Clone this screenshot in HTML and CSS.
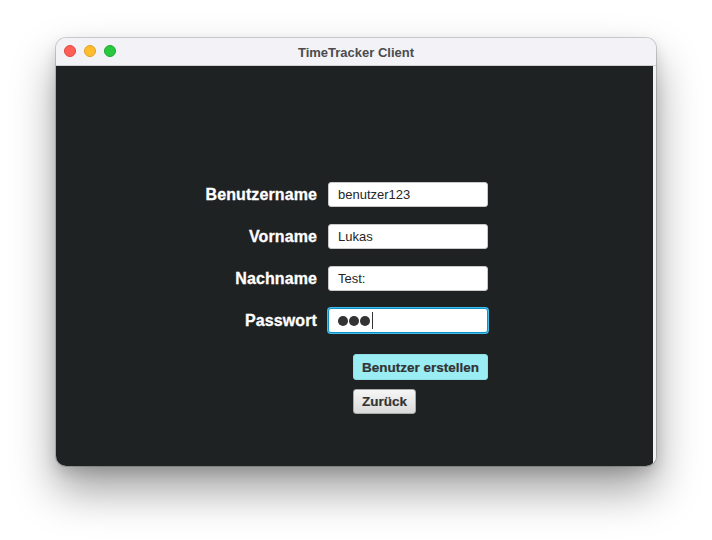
FILE: index.html
```html
<!DOCTYPE html>
<html lang="de">
<head>
<meta charset="utf-8">
<title>TimeTracker Client</title>
<link rel="stylesheet" href="styles.css">
</head>
<body>
<div class="window">
  <div class="titlebar">
    <div class="lights">
      <span class="light red"></span>
      <span class="light yellow"></span>
      <span class="light green"></span>
    </div>
    <div class="title">TimeTracker Client</div>
  </div>
  <div class="content">
    <div class="pane">
      <div class="form">
        <label class="label">Benutzername</label>
        <div class="field">benutzer123</div>
        <label class="label">Vorname</label>
        <div class="field">Lukas</div>
        <label class="label">Nachname</label>
        <div class="field">Test:</div>
        <label class="label">Passwort</label>
        <div class="field focused" aria-label="Passwort ●●●"><span class="dot"></span><span class="dot"></span><span class="dot"></span><span class="caret"></span></div>
      </div>
      <div class="actions">
        <button class="btn primary">Benutzer erstellen</button>
        <button class="btn secondary">Zurück</button>
      </div>
    </div>
    <div class="strip"></div>
  </div>
</div>
</body>
</html>
```
FILE: styles.css
```css
html, body {
  margin: 0;
  padding: 0;
  background: #ffffff;
}
body {
  padding: 38px 0 0 56px;
  height: 540px;
  box-sizing: border-box;
  font-family: "Liberation Sans", Arial, sans-serif;
}
.window {
  width: 600px;
  height: 428px;
  border-radius: 10px;
  overflow: hidden;
  box-shadow: 0 0 0 1px rgba(0,0,0,0.16), 0 24px 44px rgba(0,0,0,0.38), 0 6px 14px rgba(0,0,0,0.14);
  display: flex;
  flex-direction: column;
}
.titlebar {
  height: 28px;
  background: #f3f2f7;
  position: relative;
  display: flex;
  align-items: center;
  justify-content: center;
  border-bottom: 1px solid #d0d0d0;
  box-sizing: border-box;
}
.lights {
  position: absolute;
  left: 8px;
  top: 7px;
  display: flex;
  gap: 8px;
}
.light {
  width: 12px;
  height: 12px;
  border-radius: 50%;
  box-sizing: border-box;
}
.red { background: #fe5f57; border: 0.5px solid #e2463f; }
.yellow { background: #febc2e; border: 0.5px solid #e1a123; }
.green { background: #28c840; border: 0.5px solid #1daa2c; }
.title {
  font-size: 13px;
  font-weight: bold;
  color: #4b4b4d;
  margin-left: 0;
  margin-top: 1px;
}
.content {
  flex: 1;
  display: flex;
}
.pane {
  flex: 1;
  background: #1f2223;
  padding: 116px 0 0 111px;
}
.strip {
  width: 3px;
  background: #f2f2f2;
}
.form {
  display: grid;
  grid-template-columns: 150px 160px;
  column-gap: 11px;
  row-gap: 17px;
  align-items: center;
}
.label {
  text-align: right;
  color: #ffffff;
  font-size: 16px;
  font-weight: bold;
  letter-spacing: 0.1px;
  -webkit-text-stroke: 0.3px #ffffff;
}
.field {
  height: 25px;
  box-sizing: border-box;
  background: #ffffff;
  border: 1px solid #c9c9c9;
  border-radius: 3px;
  padding: 0 9px;
  font-size: 13px;
  color: #262626;
  display: flex;
  align-items: center;
}
.field.focused {
  border: 1px solid #0a93c7;
  box-shadow: 0 0 0 1px #46bde9;
  padding-left: 9px;
  gap: 1px;
}
.dot {
  width: 10px;
  height: 10px;
  border-radius: 50%;
  background: #333333;
}
.caret {
  display: inline-block;
  width: 1px;
  height: 17px;
  background: #333;
  margin-left: 1px;
}
.actions {
  display: flex;
  flex-direction: column;
  align-items: flex-start;
  gap: 9px;
  margin: 21px 0 0 186px;
}
.btn {
  font-family: "Liberation Sans", Arial, sans-serif;
  font-size: 13.5px;
  font-weight: bold;
  color: #333333;
  border-radius: 3px;
  padding: 0 8px;
  height: 26px;
  box-sizing: border-box;
  cursor: default;
  -webkit-text-stroke: 0.2px #333333;
}
.primary {
  background: #9aedf2;
  border: 1px solid #8fdfe4;
}
.secondary {
  height: 25px;
  background: linear-gradient(#f6f6f6, #dadada);
  border: 1px solid #a9a9a9;
}
```
